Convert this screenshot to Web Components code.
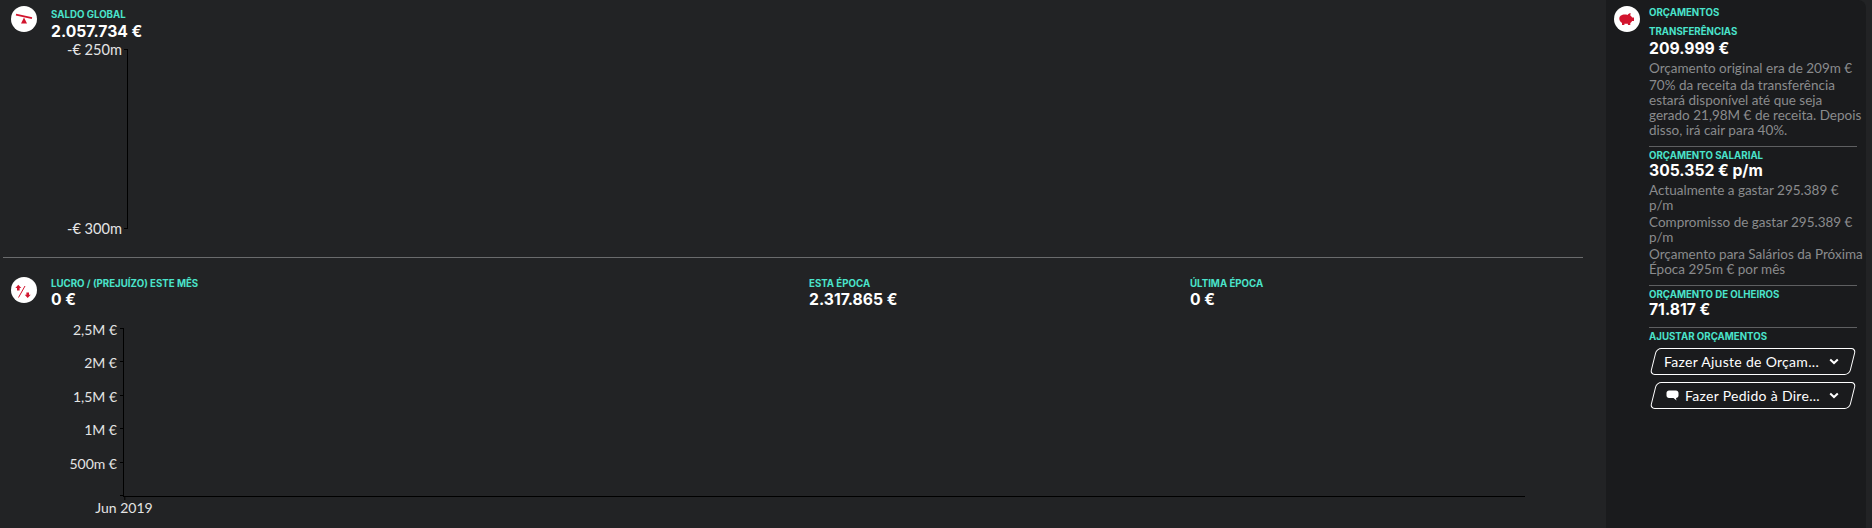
<!DOCTYPE html>
<html lang="pt">
<head>
<meta charset="utf-8">
<title>Finanças</title>
<style>
  html, body { margin: 0; height: 100%; }
  body { background: #222325; font-family: "Inter", "Liberation Sans", sans-serif; overflow: hidden; }
</style>
</head>
<body>
<finance-page></finance-page>

<script>
const ICONS = {
  seesaw: '<path d="M5 8.6 21 12.2" stroke="#d2142e" stroke-width="1.8" fill="none"/><path d="M13 11.5 16 17.5H10Z" fill="#d2142e"/>',
  percent: '<path d="M14 9 7.5 20.5" stroke="#d2142e" stroke-width="1" fill="none"/><path d="M7.3 7.8 10.3 11H8.6V13.4H6V11H4.3Z" fill="#d2142e"/><path d="M16.7 21 13.7 17.8H15.4V15.4H18V17.8H19.7Z" fill="#d2142e"/>',
  pig: '<path d="M5.3 12.6C5.3 10.2 7.6 8.6 10.8 8.6 11.8 8.6 12.7 8.7 13.5 9 14.2 8 15.4 7 16.6 7L16.3 9.4C17.2 10 17.8 10.8 18.1 11.5H20V15H18.1C17.6 15.9 16.9 16.5 16.3 16.9V19H13.9V17.8H10.4V19H8V17C6.2 16 5.3 14.5 5.3 12.6Z" fill="#d2142e"/>'
};

class IconBadge extends HTMLElement {
  connectedCallback() {
    const name = this.getAttribute('name');
    this.attachShadow({ mode: 'open' }).innerHTML = `
      <style>
        :host { display: block; width: 26px; height: 26px; flex: none; }
        svg { display: block; }
      </style>
      <svg width="26" height="26" viewBox="0 0 26 26">
        <circle cx="13" cy="13" r="13" fill="#fff"/>${ICONS[name]}
      </svg>`;
  }
}
customElements.define('icon-badge', IconBadge);

class StatBlock extends HTMLElement {
  connectedCallback() {
    const value = this.getAttribute('value');
    this.attachShadow({ mode: 'open' }).innerHTML = `
      <style>
        :host { display: block; }
        .label { font-size: 9.7px; line-height: 12px; padding-top: 1px; font-weight: 700; color: #4ae3cb; text-transform: uppercase; white-space: nowrap; }
        .value { font-size: 15.7px; line-height: 18px; font-weight: 700; color: #fff; white-space: nowrap; margin-top: var(--value-gap, 0); }
      </style>
      <div class="label">${this.getAttribute('label')}</div>
      ${value ? `<div class="value">${value}</div>` : ''}
      <slot></slot>`;
  }
}
customElements.define('stat-block', StatBlock);

class AxisChart extends HTMLElement {
  connectedCallback() {
    const ticks = this.getAttribute('ticks').split('|');
    const xLabel = this.getAttribute('x-label');
    const rows = ticks.map(t => `<div class="tick"><span>${t}</span></div>`).join('');
    this.attachShadow({ mode: 'open' }).innerHTML = `
      <style>
        :host { display: grid; grid-template-columns: var(--gutter) 1fr; height: var(--plot-height); font-family: "Lato", sans-serif; font-size: var(--tick-size, 14px); color: #e4e4e4; }
        .ticks { display: flex; flex-direction: column; justify-content: space-between; }
        .tick { height: 1px; display: flex; align-items: center; justify-content: flex-end; gap: var(--tick-gap); white-space: nowrap; }
        .tick span { padding-top: var(--tick-drop, 2px); }
        .tick::after { content: ""; width: 3px; height: 1px; background: #000; }
        .plot { position: relative; border-left: 1px solid #000; }
        .plot.base { border-bottom: 1px solid #000; }
        .x-label { position: absolute; left: 0; top: 100%; padding-top: 3px; transform: translateX(-50%); white-space: nowrap; }
        .x-label::before { content: ""; position: absolute; left: 50%; top: 1px; width: 1px; height: 3px; background: #000; }
      </style>
      <div class="ticks">${rows}</div>
      <div class="plot ${xLabel ? 'base' : ''}">${xLabel ? `<div class="x-label">${xLabel}</div>` : ''}</div>`;
  }
}
customElements.define('axis-chart', AxisChart);

class BudgetButton extends HTMLElement {
  connectedCallback() {
    this.attachShadow({ mode: 'open' }).innerHTML = `
      <style>
        :host { display: flex; align-items: center; position: relative; height: 27px; box-sizing: border-box; padding: 0 16px 0 13px; color: #fff; font-family: "Lato", sans-serif; font-size: 14px; letter-spacing: .3px; }
        :host::before { content: ""; position: absolute; inset: 0 2px; border: 1.6px solid #fff; border-radius: 5px; transform: skewX(-14deg); }
        .text { flex: 1; min-width: 0; display: flex; align-items: center; gap: 6px; white-space: nowrap; }
        .chev { flex: none; }
      </style>
      <span class="text"><slot></slot></span>
      <svg class="chev" width="10" height="7" viewBox="0 0 10 7"><path d="M1.2 1.4 5 5 8.8 1.4" stroke="#fff" stroke-width="2" fill="none"/></svg>`;
  }
}
customElements.define('budget-button', BudgetButton);

class BudgetPanel extends HTMLElement {
  connectedCallback() {
    this.attachShadow({ mode: 'open' }).innerHTML = `
      <style>
        :host { display: flex; gap: 9px; box-sizing: border-box; width: 260px; height: 528px; margin-right: 6px; padding: 6px 9px 0 8px; background: #1a1b1d; border-radius: 0 8px 0 0; }
        .body { flex: 1; min-width: 0; }
        .title { font-size: 9.7px; line-height: 13px; font-weight: 700; color: #4ae3cb; margin-bottom: 6px; }
        .note { font-family: "Lato", sans-serif; font-size: 13.5px; line-height: 15px; color: #8a8b8d; margin-top: var(--note-gap); white-space: nowrap; }
        hr { border: 0; border-top: 1px solid #5e5f61; margin: 8px 0 2px; }
        .transfers { --value-gap: 2px; --note-gap: 2.7px; }
        .wages { --note-gap: 2px; }
        .actions { display: flex; flex-direction: column; gap: 7px; margin: 5px 2px 0 2px; }
        .bubble { flex: none; margin-left: 2px; }
      </style>
      <icon-badge name="pig"></icon-badge>
      <div class="body">
        <div class="title">ORÇAMENTOS</div>
        <stat-block class="transfers" label="Transferências" value="209.999 €">
          <div class="note">Orçamento original era de 209m €</div>
          <div class="note">70% da receita da transferência<br>estará disponível até que seja<br>gerado 21,98M € de receita. Depois<br>disso, irá cair para 40%.</div>
        </stat-block>
        <hr>
        <stat-block class="wages" label="Orçamento Salarial" value="305.352 € p/m">
          <div class="note" style="margin-top:2.5px">Actualmente a gastar 295.389 €<br>p/m</div>
          <div class="note">Compromisso de gastar 295.389 €<br>p/m</div>
          <div class="note">Orçamento para Salários da Próxima<br>Época 295m € por mês</div>
        </stat-block>
        <hr>
        <stat-block label="Orçamento de Olheiros" value="71.817 €"></stat-block>
        <hr>
        <stat-block label="Ajustar Orçamentos"></stat-block>
        <div class="actions">
          <budget-button>Fazer Ajuste de Orçam...</budget-button>
          <budget-button><svg class="bubble" width="13" height="11" viewBox="0 0 13 11"><path d="M3 .5H10C11.4.5 12.5 1.4 12.5 3V5.5C12.5 7 11.4 8 10 8L10.5 10.5 7.5 8H3C1.6 8 .5 7 .5 5.5V3C.5 1.4 1.6.5 3 .5Z" fill="#fff"/></svg>Fazer Pedido à Dire...</budget-button>
        </div>
      </div>`;
  }
}
customElements.define('budget-panel', BudgetPanel);

class FinancePage extends HTMLElement {
  connectedCallback() {
    this.attachShadow({ mode: 'open' }).innerHTML = `
      <style>
        :host { display: flex; height: 528px; }
        main { width: 1606px; flex: none; box-sizing: border-box; padding: 6px 23px 0 3px; }
        .head { display: flex; gap: 14px; padding-left: 8px; }
        .balance { height: 251px; }
        .balance .head { height: 31px; }
        .balance stat-block { padding-top: 2px; --value-gap: 2px; }
        .balance axis-chart { --gutter: 124px; --plot-height: 180px; --tick-gap: 2px; --tick-size: 14.6px; --tick-drop: 0px; width: 300px; margin-top: 12px; }
        .rule { height: 1px; background: #6a6b6d; }
        .profit { padding-top: 19px; --value-gap: .5px; }
        .stats { display: grid; grid-template-columns: 758px 381px 1fr; flex: 1; }
        .profit axis-chart { --gutter: 120px; --plot-height: 169px; --tick-gap: 3px; width: 1522px; margin-top: 19px; }
      </style>
      <main>
        <section class="balance">
          <div class="head">
            <icon-badge name="seesaw"></icon-badge>
            <stat-block label="Saldo Global" value="2.057.734 €"></stat-block>
          </div>
          <axis-chart ticks="-€ 250m|-€ 300m"></axis-chart>
        </section>
        <div class="rule"></div>
        <section class="profit">
          <div class="head">
            <icon-badge name="percent"></icon-badge>
            <div class="stats">
              <stat-block label="Lucro / (Prejuízo) este mês" value="0 €"></stat-block>
              <stat-block label="Esta Época" value="2.317.865 €"></stat-block>
              <stat-block label="Última Época" value="0 €"></stat-block>
            </div>
          </div>
          <axis-chart ticks="2,5M €|2M €|1,5M €|1M €|500m €|" x-label="Jun 2019"></axis-chart>
        </section>
      </main>
      <div style="flex:1"></div>
      <budget-panel></budget-panel>`;
  }
}
customElements.define('finance-page', FinancePage);
</script>
</body>
</html>
